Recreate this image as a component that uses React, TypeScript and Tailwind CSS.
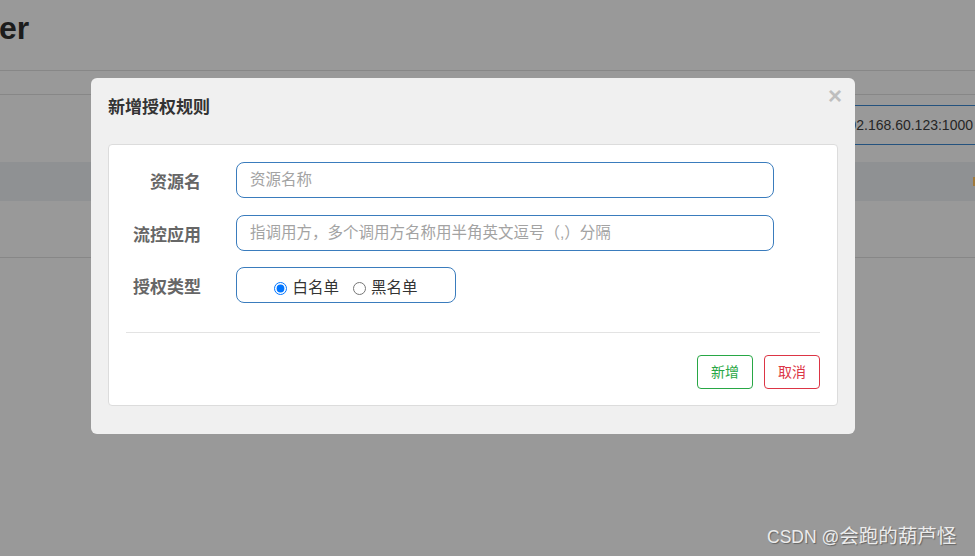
export default function App() {
  return (
    <div className="relative h-[556px] w-[975px] overflow-hidden bg-[#999999] font-['Liberation_Sans','Noto_Sans_CJK_SC',sans-serif]">
      {/* background page */}
      <div className="h-[71px] overflow-hidden border-b border-[#878787]">
        <div className="-ml-[1px] pt-[8px] text-[32px] font-bold leading-[40px] text-[#1c1c1c]">er</div>
      </div>
      <div className="h-[24px] border-b border-[#878787]" />
      <div className="flex h-[67px] justify-end pt-[10px]">
        <div className="flex h-[40px] items-center border-y border-[#24527e] pl-[20px] pr-[2px] text-[14px] text-[#262626]">
          192.168.60.123:1000
        </div>
      </div>
      <div className="flex h-[39px] items-center justify-end bg-[#8f9193]">
        <div className="h-[9px] w-[2px] bg-[#a07a3c]" />
      </div>
      <div className="h-[57px] border-b border-[#878787]" />

      {/* modal */}
      <div className="absolute left-[91px] top-[78px] h-[356px] w-[764px] rounded-[6px] bg-[#f0f0f0] px-[17px]">
        <button className="absolute right-[13px] top-[6px] text-[24px] font-bold leading-none text-[#bebebe]">×</button>
        <div className="h-[66px] pt-[18px] text-[17px] font-bold leading-[24px] text-[#333333]">新增授权规则</div>
        <div className="h-[262px] rounded-[4px] border border-[#dcdcdc] bg-white pt-[17px]">
          <div className="flex h-[36px] items-center">
            <div className="w-[92px] pt-[5px] text-right text-[17px] font-bold text-[#666666]">资源名</div>
            <input
              className="ml-[35px] h-[36px] w-[538px] rounded-[8px] border border-[#3a7cbd] px-[13px] text-[15.5px] outline-none placeholder:text-[#a3a3a3]"
              placeholder="资源名称"
            />
          </div>
          <div className="mt-[17px] flex h-[36px] items-center">
            <div className="w-[92px] pt-[5px] text-right text-[17px] font-bold text-[#666666]">流控应用</div>
            <input
              className="ml-[35px] h-[36px] w-[538px] rounded-[8px] border border-[#3a7cbd] px-[13px] text-[15.5px] outline-none placeholder:text-[#a3a3a3]"
              placeholder="指调用方，多个调用方名称用半角英文逗号（,）分隔"
            />
          </div>
          <div className="mt-[16px] flex h-[36px] items-center">
            <div className="w-[92px] pt-[5px] text-right text-[17px] font-bold text-[#666666]">授权类型</div>
            <div className="ml-[35px] flex h-[36px] w-[220px] items-center justify-center rounded-[8px] border border-[#3a7cbd] pt-[6px] text-[15.5px] text-[#333333]">
              <label className="flex items-center">
                <input type="radio" name="t" defaultChecked className="m-0 h-[13px] w-[13px]" />
                <span className="ml-[5px]">白名单</span>
              </label>
              <label className="ml-[14px] flex items-center">
                <input type="radio" name="t" className="m-0 h-[13px] w-[13px]" />
                <span className="ml-[5px]">黑名单</span>
              </label>
            </div>
          </div>
          <div className="mx-[17px] mt-[29px] h-px bg-[#e3e3e3]" />
          <div className="mt-[22px] flex justify-end gap-[11px] pr-[17px]">
            <button className="h-[34px] w-[56px] rounded-[4px] border border-[#28a745] bg-white text-[14px] text-[#28a745]">新增</button>
            <button className="h-[34px] w-[56px] rounded-[4px] border border-[#dc3545] bg-white text-[14px] text-[#dc3545]">取消</button>
          </div>
        </div>
      </div>

      {/* watermark */}
      <div className="absolute left-[767px] top-[522px] flex items-baseline text-[#ececec] [text-shadow:1px_1px_1px_rgba(0,0,0,0.35)]">
        <span className="text-[17.5px]">CSDN @</span>
        <span className="text-[19.5px]">会跑的葫芦怪</span>
      </div>
    </div>
  );
}
